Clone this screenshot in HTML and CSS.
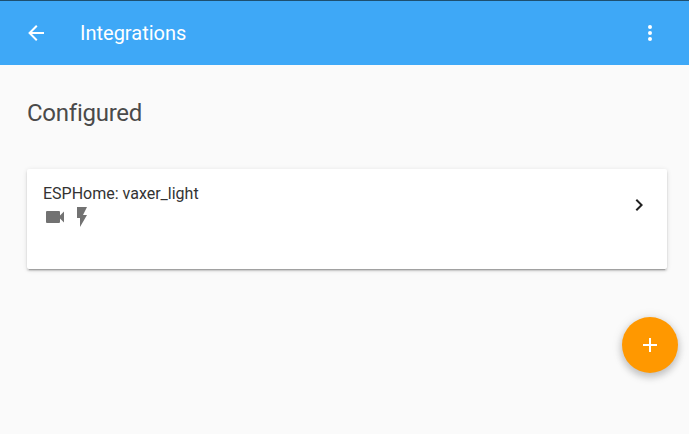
FILE: index.html
```html
<!DOCTYPE html>
<html lang="en">
<head>
    <meta charset="UTF-8">
    <meta name="viewport" content="width=device-width, initial-scale=1.0">
    <title>Integrations</title>
    <link rel="stylesheet" href="styles.css">
</head>
<body>
    <header class="toolbar">
        <button class="icon-btn" type="button" aria-label="Back">
            <svg viewBox="0 0 24 24" width="24" height="24"><path d="M20 11v2H8l5.5 5.5-1.42 1.42L4.16 12l7.92-7.92L13.5 5.5 8 11h12z"/></svg>
        </button>
        <div class="toolbar-title">Integrations</div>
        <button class="icon-btn" type="button" aria-label="Menu">
            <svg viewBox="0 0 24 24" width="24" height="24"><path d="M12 16a2 2 0 1 1 0 4 2 2 0 0 1 0-4zm0-6a2 2 0 1 1 0 4 2 2 0 0 1 0-4zm0-6a2 2 0 1 1 0 4 2 2 0 0 1 0-4z"/></svg>
        </button>
    </header>

    <main class="content">
        <h1 class="section-title">Configured</h1>
        <div class="card">
            <div class="card-info">
                <div class="card-name">ESPHome: vaxer_light</div>
                <div class="card-icons">
                    <svg viewBox="0 0 24 24" width="24" height="24"><path d="M17 10.5V7a1 1 0 0 0-1-1H4a1 1 0 0 0-1 1v10a1 1 0 0 0 1 1h12a1 1 0 0 0 1-1v-3.5l4 4v-11l-4 4z"/></svg>
                    <svg viewBox="0 0 24 24" width="24" height="24"><path d="M7 2v11h3v9l7-12h-4l4-8H7z"/></svg>
                </div>
            </div>
            <svg class="chevron" viewBox="0 0 24 24" width="24" height="24"><path d="M8.59 16.58 13.17 12 8.59 7.41 10 6l6 6-6 6-1.41-1.42z"/></svg>
        </div>
    </main>

    <button class="fab" type="button" aria-label="Add">
        <svg viewBox="0 0 24 24" width="24" height="24"><path d="M19 13h-6v6h-2v-6H5v-2h6V5h2v6h6v2z"/></svg>
    </button>
</body>
</html>
```

FILE: styles.css
```css
html, body {
    height: 100%;
}
body {
    font-family: Roboto, "Noto Sans", sans-serif;
    margin: 0;
    background-color: #fafafa;
    overflow: hidden;
}
.toolbar {
    display: flex;
    align-items: center;
    height: 64px;
    padding: 0 27px 0 24px;
    background-color: #3ea8f7;
    border-top: 1px solid #1d4f70;
    color: #fff;
}
.toolbar-title {
    flex-grow: 1;
    margin-left: 32px;
    font-size: 20px;
    line-height: 28px;
}
.icon-btn {
    display: flex;
    padding: 0;
    border: none;
    background: none;
    cursor: pointer;
}
.icon-btn svg {
    fill: #fff;
}
.content {
    padding: 0 22px 0 27px;
}
.section-title {
    margin: 32px 0 40px;
    font-size: 24px;
    font-weight: 400;
    line-height: 32px;
    letter-spacing: -0.25px;
    color: #4a4a4a;
}
.card {
    display: flex;
    align-items: flex-start;
    justify-content: space-between;
    box-sizing: border-box;
    height: 100px;
    padding: 14px 16px;
    background-color: #fff;
    border-radius: 2px;
    box-shadow: 0 2px 2px 0 rgba(0,0,0,0.14), 0 1px 5px 0 rgba(0,0,0,0.12), 0 3px 1px -2px rgba(0,0,0,0.2);
}
.card-name {
    padding-top: 1px;
    font-size: 16px;
    line-height: 20px;
    color: #333;
}
.card-icons {
    display: flex;
    gap: 3px;
    margin-top: 1px;
}
.card-icons svg {
    fill: #727272;
}
.chevron {
    margin: 10px 0 0 0;
    fill: #212121;
}
.fab {
    position: fixed;
    left: 622px;
    top: 317px;
    display: flex;
    align-items: center;
    justify-content: center;
    width: 56px;
    height: 56px;
    padding: 0;
    border: none;
    border-radius: 50%;
    background-color: #ff9800;
    box-shadow: 0 4px 8px rgba(0,0,0,0.2), 0 1px 12px rgba(0,0,0,0.12);
    cursor: pointer;
}
.fab svg {
    fill: #fff;
}
```
